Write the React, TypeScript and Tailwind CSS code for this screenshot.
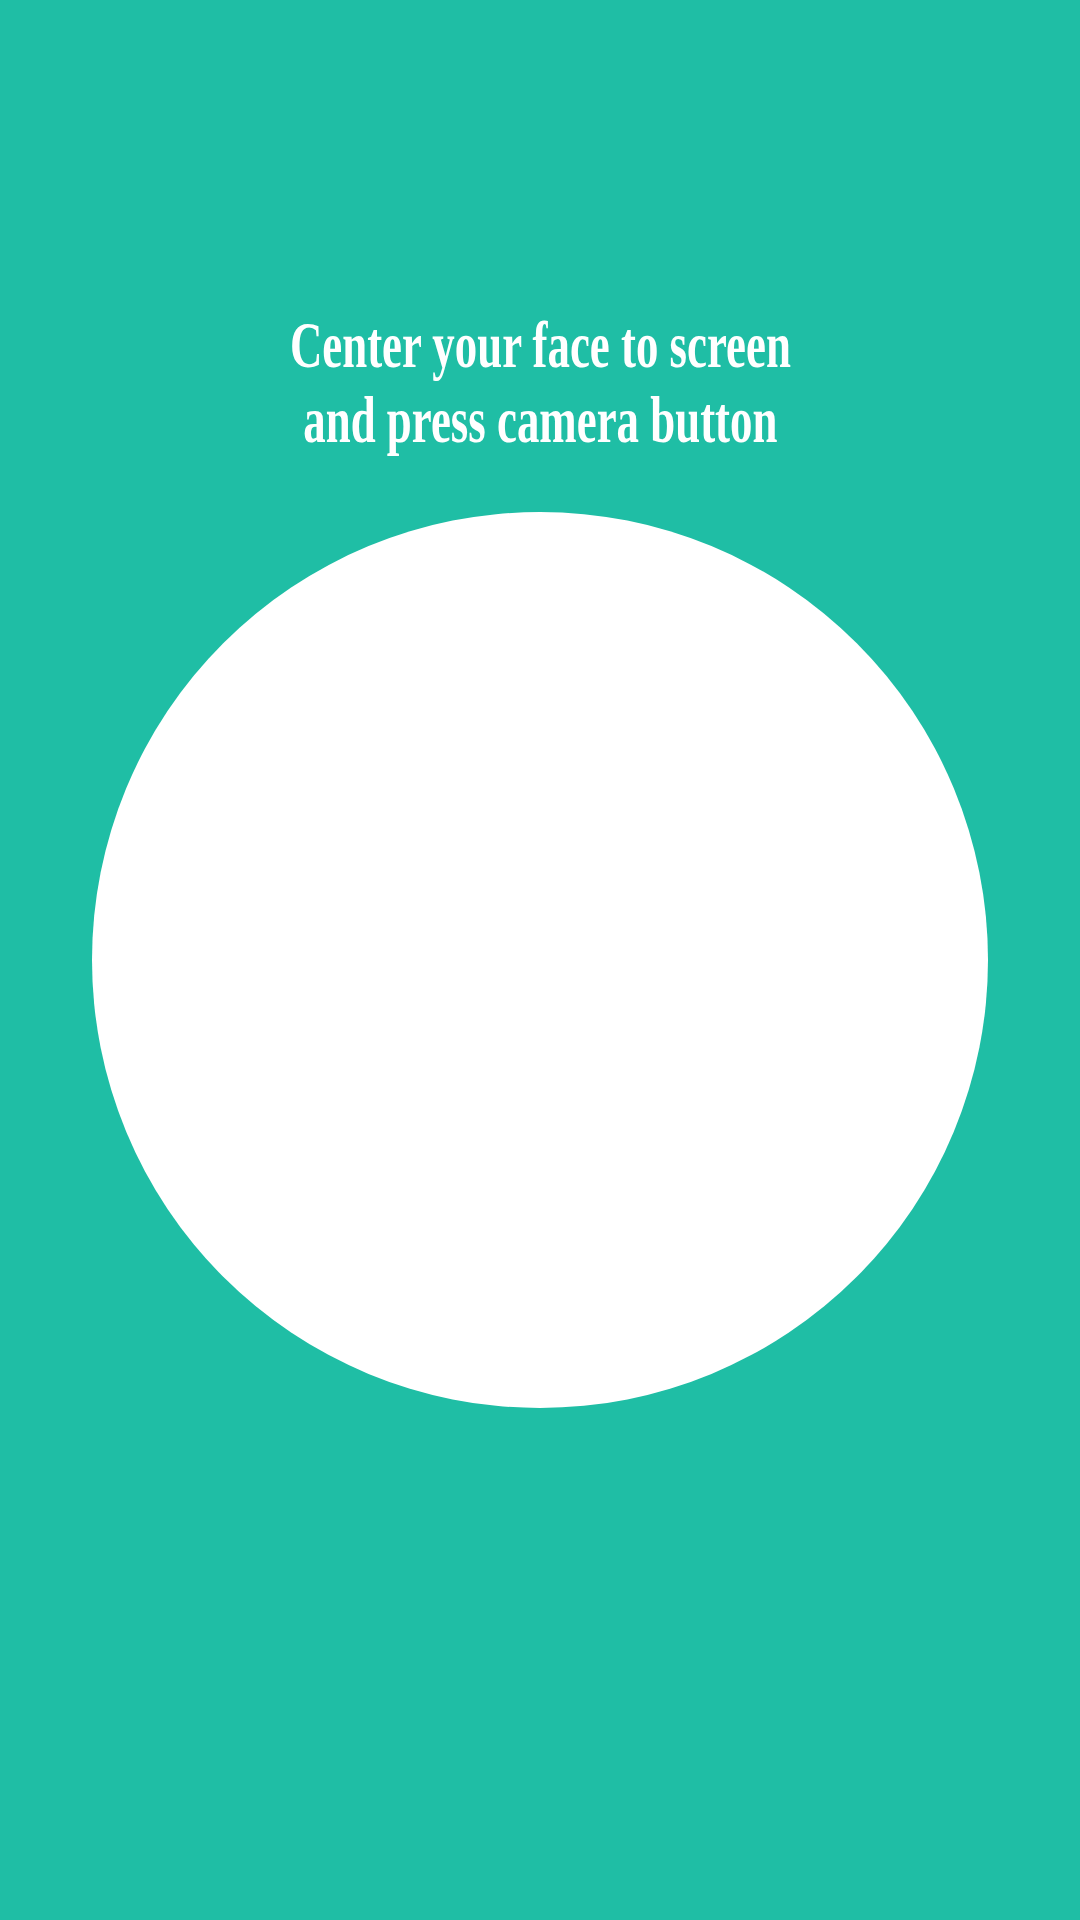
export default function App() {
  return (
    <div className="w-[1080px] h-[1920px] bg-[#1fbea5] flex flex-col items-center overflow-hidden">
      {/* Instruction */}
      <div className="pt-[307px] w-full flex justify-center">
        <h1 className="text-white font-bold text-center text-[66px] leading-[75px] font-['Liberation_Serif',serif] whitespace-nowrap scale-x-[0.68]">
          Center your face to screen
          <br />
          and press camera button
        </h1>
      </div>

      {/* Face frame */}
      <div className="mt-[55px] w-[896px] h-[896px] rounded-full bg-white"></div>
    </div>
  )
}
